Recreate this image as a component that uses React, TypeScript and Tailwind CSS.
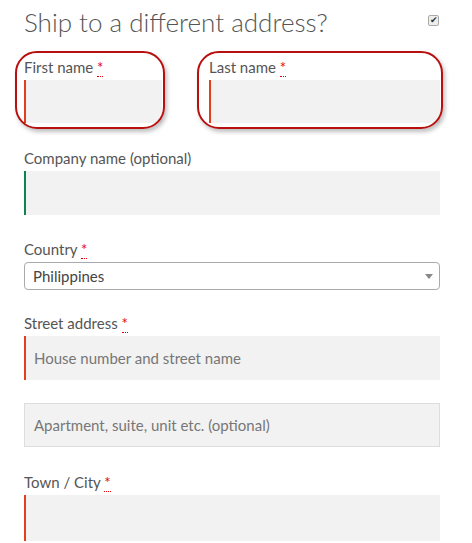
import React from 'react';

const Req = () => (
  <abbr className="text-red-600 no-underline border-b border-dotted border-red-600 leading-none" title="required">*</abbr>
);

const Label = ({ text, req }: { text: string; req?: boolean }) => (
  <label className="block text-[15px] text-[#555] leading-5 mb-[3px]">
    {text}
    {req && <Req />}
  </label>
);

export default function App() {
  return (
    <div className="w-[472px] h-[543px] overflow-hidden bg-white pl-6 pr-8" style={{ fontFamily: 'Lato, "Open Sans", sans-serif' }}>
      <div className="flex items-center justify-between pt-[4px] h-[40px]">
        <h3 className="text-[26px] font-light text-[#555] leading-none">Ship to a different address?</h3>
        <div className="w-[11px] h-[11px] border border-[#aaa] rounded-[2px] bg-[#eee] flex items-center justify-center text-[9px] text-[#333] mr-[1px] -mt-1">✔</div>
      </div>
      <div className="flex gap-[47px] mt-[17px]">
        <div className="relative w-[138px]">
          <Label text="First name " req />
          <div className="h-[43px] bg-[#f2f2f2] border-l-2 border-[#e2401c]" />
          <div className="absolute -left-[9px] -top-[6px] w-[150px] h-[78px] border-2 border-[#b80f0f] rounded-[22px] shadow-[2px_3px_4px_rgba(0,0,0,0.25)]" />
        </div>
        <div className="relative flex-1">
          <Label text="Last name " req />
          <div className="h-[43px] bg-[#f2f2f2] border-l-2 border-[#e2401c]" />
          <div className="absolute -left-[12px] -top-[6px] w-[246px] h-[78px] border-2 border-[#b80f0f] rounded-[22px] shadow-[2px_3px_4px_rgba(0,0,0,0.25)]" />
        </div>
      </div>
      <div className="mt-[25px]">
        <Label text="Company name (optional)" />
        <div className="h-[44px] bg-[#f2f2f2] border-l-2 border-[#0f834d]" />
      </div>
      <div className="mt-[24px]">
        <Label text="Country " req />
        <div className="h-[28px] border border-[#aaa] rounded-[4px] flex items-center justify-between px-2 text-[15px] text-[#444]">
          <span>Philippines</span>
          <span className="border-x-[4px] border-x-transparent border-t-[5px] border-t-[#888] mr-[-2px]" />
        </div>
      </div>
      <div className="mt-[23px]">
        <Label text="Street address " req />
        <div className="h-[44px] bg-[#f2f2f2] border-l-2 border-[#e2401c] flex items-center pl-2 text-[15px] text-[#777]">House number and street name</div>
        <div className="mt-[23px] h-[44px] bg-[#f2f2f2] border border-[#ddd] flex items-center pl-[9px] text-[15px] text-[#777]">Apartment, suite, unit etc. (optional)</div>
      </div>
      <div className="mt-[25px]">
        <Label text="Town / City " req />
        <div className="h-[46px] bg-[#f2f2f2] border-l-2 border-[#e2401c]" />
      </div>
    </div>
  );
}
